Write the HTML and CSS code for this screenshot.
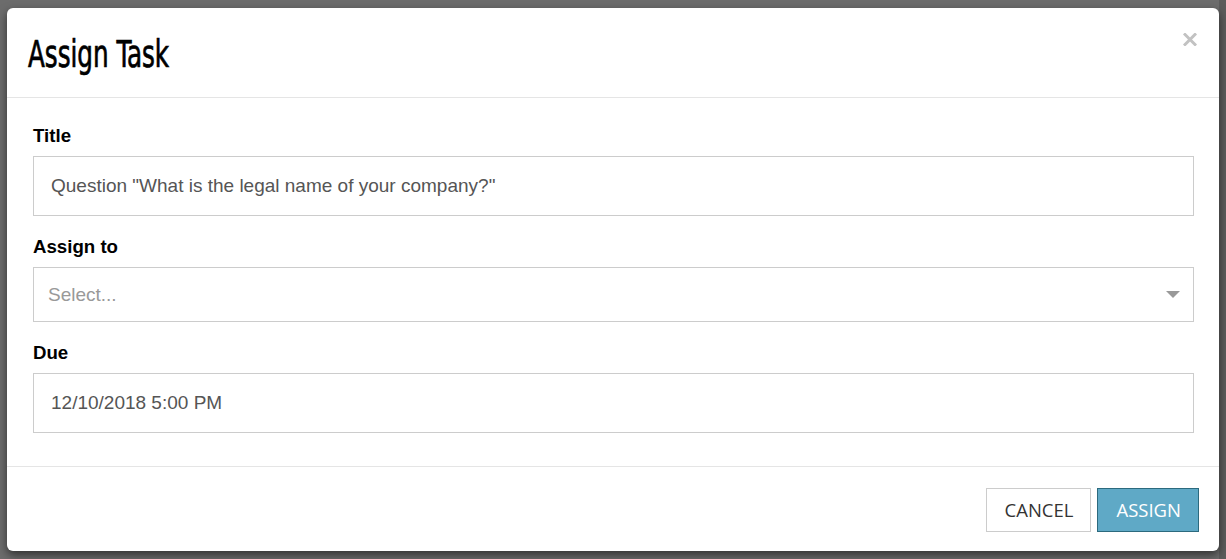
FILE: index.html
```html
<!DOCTYPE html>
<html lang="en">
<head>
<meta charset="utf-8">
<title>Assign Task</title>
<link rel="stylesheet" href="styles.css">
</head>
<body>
<div class="backdrop">
  <div class="modal">
    <div class="modal-header">
      <h4 class="modal-title"><span>Assign Task</span></h4>
      <button class="close" aria-label="Close">
        <svg width="14" height="13" viewBox="0 0 14 13"><path d="M2 1.5 L12 11.5 M12 1.5 L2 11.5" stroke="#c2c2c2" stroke-width="3" stroke-linecap="square"/></svg>
      </button>
    </div>
    <div class="modal-body">
      <div class="form-group">
        <label class="form-label">Title</label>
        <div class="form-control tall">Question "What is the legal name of your company?"</div>
      </div>
      <div class="form-group">
        <label class="form-label">Assign to</label>
        <div class="form-control select">
          <span class="placeholder">Select...</span>
          <span class="caret"></span>
        </div>
      </div>
      <div class="form-group">
        <label class="form-label">Due</label>
        <div class="form-control tall">12/10/2018 5:00 PM</div>
      </div>
    </div>
    <div class="modal-footer">
      <button class="btn btn-default">CANCEL</button>
      <button class="btn btn-primary">ASSIGN</button>
    </div>
  </div>
</div>
</body>
</html>
```

FILE: styles.css
```css
html, body {
  margin: 0;
  padding: 0;
  height: 559px;
  overflow: hidden;
}
body {
  background: #666666;
  font-family: "Liberation Sans", Arial, sans-serif;
}
.backdrop {
  padding: 8px 7px 0 7px;
  height: 559px;
  box-sizing: border-box;
  background: linear-gradient(to right, #6c6c6c 0, #6c6c6c 1219px, #5c5c5c 1219px);
}
.modal {
  width: 1212px;
  height: 543px;
  background: #fff;
  border-radius: 6px;
  box-shadow: 0 4px 10px rgba(0, 0, 0, 0.55);
  display: flex;
  flex-direction: column;
  box-sizing: border-box;
}
.modal-header {
  height: 90px;
  box-sizing: border-box;
  border-bottom: 1px solid #e5e5e5;
  display: flex;
  align-items: center;
  justify-content: space-between;
  padding: 0 22px 0 21px;
}
.modal-title {
  margin: 0;
  font-family: "DejaVu Sans Condensed", "DejaVu Sans", sans-serif;
  font-weight: normal;
  font-size: 37px;
  line-height: 40px;
  color: #000;
  position: relative;
  top: 2px;
}
.modal-title span {
  display: inline-block;
  transform: scaleX(0.74);
  transform-origin: left center;
  -webkit-text-stroke: 0.7px #000;
}
.close {
  border: 0;
  background: transparent;
  padding: 0;
  margin: 0;
  width: 14px;
  height: 13px;
  display: flex;
  position: relative;
  top: -13px;
  cursor: pointer;
}
.modal-body {
  padding: 28px 25px 33px 26px;
  display: flex;
  flex-direction: column;
  gap: 21px;
}
.form-group {
  display: flex;
  flex-direction: column;
}
.form-label {
  font-size: 18.67px;
  font-weight: bold;
  line-height: 20px;
  color: #000;
  margin-bottom: 10px;
}
.form-control {
  border: 1px solid #cccccc;
  box-sizing: border-box;
  height: 60px;
  display: flex;
  align-items: center;
  padding: 0 17px;
  font-size: 19px;
  color: #555555;
  background: #fff;
}
.form-control.select {
  height: 55px;
  padding: 0 13px 0 14px;
  justify-content: space-between;
}
.placeholder {
  color: #999999;
}
.caret {
  width: 0;
  height: 0;
  border-left: 7px solid transparent;
  border-right: 7px solid transparent;
  border-top: 7px solid #999999;
}
.modal-footer {
  border-top: 1px solid #e5e5e5;
  padding: 21px 20px 0 0;
  display: flex;
  justify-content: flex-end;
  gap: 6px;
}
.btn {
  height: 44px;
  box-sizing: border-box;
  padding: 0 17px 0 18px;
  font-family: "Open Sans", sans-serif;
  font-size: 18.5px;
  line-height: 42px;
  border-radius: 0;
  cursor: pointer;
}
.btn-default {
  background: #fff;
  border: 1px solid #cccccc;
  color: #333333;
}
.btn-primary {
  background: #5fa9c6;
  border: 1px solid #2c6a7e;
  color: #fff;
}
```
